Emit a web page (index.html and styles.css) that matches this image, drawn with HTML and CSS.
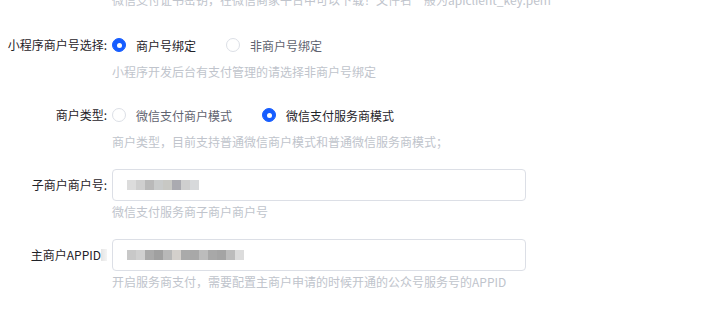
FILE: index.html
```
<!DOCTYPE html>
<html lang="zh-CN">
<head>
    <meta charset="UTF-8">
    <meta name="viewport" content="width=device-width, initial-scale=1.0">
    <title>支付设置</title>
    <link rel="stylesheet" href="styles.css">
</head>
<body>
<div class="form">
    <div class="form-tail">
        <div class="form-help">微信支付证书密钥，在微信商家平台中可以下载！文件名一般为apiclient_key.pem</div>
    </div>

    <div class="form-item">
        <div class="form-label">小程序商户号选择:</div>
        <div class="form-content">
            <div class="radio-group">
                <label class="radio checked"><span class="radio-dot"></span><span class="radio-text">商户号绑定</span></label>
                <label class="radio"><span class="radio-dot"></span><span class="radio-text">非商户号绑定</span></label>
            </div>
            <div class="form-help">小程序开发后台有支付管理的请选择非商户号绑定</div>
        </div>
    </div>

    <div class="form-item">
        <div class="form-label">商户类型:</div>
        <div class="form-content">
            <div class="radio-group">
                <label class="radio"><span class="radio-dot"></span><span class="radio-text">微信支付商户模式</span></label>
                <label class="radio checked"><span class="radio-dot"></span><span class="radio-text">微信支付服务商模式</span></label>
            </div>
            <div class="form-help">商户类型，目前支持普通微信商户模式和普通微信服务商模式；</div>
        </div>
    </div>

    <div class="form-item">
        <div class="form-label">子商户商户号:</div>
        <div class="form-content">
            <div class="input">
                <div class="mosaic">
                    <i style="background:#dcdcdc"></i><i style="background:#cfcfcf"></i><i style="background:#b9b9b9"></i><i style="background:#c9cbcb"></i><i style="background:#c8c8c4"></i><i style="background:#aaaab0"></i><i style="background:#cfcfcf"></i><i style="background:#d7d9db"></i>
                </div>
            </div>
            <div class="form-help">微信支付服务商子商户商户号</div>
        </div>
    </div>

    <div class="form-item">
        <div class="form-label">主商户APPID<span class="blur-colon"></span></div>
        <div class="form-content">
            <div class="input">
                <div class="mosaic">
                    <i style="background:#c8c8c8"></i><i style="background:#d0d0d0"></i><i style="background:#aaaaaa"></i><i style="background:#a0a0a0"></i><i style="background:#b8b8b8"></i><i style="background:#d4d0cc"></i><i style="background:#aaaaaa"></i><i style="background:#a8a8a8"></i><i style="background:#bcbcbc"></i><i style="background:#a8a8a8"></i><i style="background:#a4a4a4"></i><i style="background:#bcbcbc"></i><i style="background:#dcdcdc"></i>
                </div>
            </div>
            <div class="form-help">开启服务商支付，需要配置主商户申请的时候开通的公众号服务号的APPID</div>
        </div>
    </div>
</div>
</body>
</html>
```

FILE: styles.css
```
* {
    box-sizing: border-box;
}

body {
    margin: 0;
    background-color: #ffffff;
    font-family: "Noto Sans CJK SC", "Liberation Sans", sans-serif;
    font-size: 12px;
    color: #1f2329;
}

.form {
    margin-top: -11px;
}

.form-tail {
    padding-left: 112px;
    margin-bottom: 18px;
}

.form-item {
    display: flex;
    margin-bottom: 16px;
}

.form-label {
    width: 107px;
    flex-shrink: 0;
    height: 32px;
    line-height: 32px;
    text-align: right;
    white-space: nowrap;
    color: #1f2329;
}

.blur-colon {
    display: inline-block;
    width: 6px;
    height: 12px;
    vertical-align: -1px;
    background: linear-gradient(90deg, #e4e4e4, #f4f4f4);
}

.form-content {
    margin-left: 5px;
}

.form-help {
    height: 22px;
    line-height: 22px;
    color: #c0c4cc;
    white-space: nowrap;
}

.radio-group {
    display: flex;
    align-items: center;
    gap: 30px;
    height: 32px;
}

.radio {
    display: flex;
    align-items: center;
    gap: 10px;
    color: #5f6370;
}

.radio-dot {
    width: 14px;
    height: 14px;
    border-radius: 50%;
    border: 1px solid #dcdfe6;
    background-color: #ffffff;
    display: flex;
    align-items: center;
    justify-content: center;
}

.radio.checked {
    color: #1f2329;
}

.radio.checked .radio-dot {
    border-color: #165dff;
    background-color: #165dff;
}

.radio.checked .radio-dot::after {
    content: "";
    width: 5px;
    height: 5px;
    border-radius: 50%;
    background-color: #ffffff;
}

.input {
    width: 414px;
    height: 32px;
    border: 1px solid #dcdfe6;
    border-radius: 4px;
    padding-left: 14px;
    display: flex;
    align-items: center;
}

.mosaic {
    display: flex;
    height: 10px;
}

.mosaic i {
    width: 9px;
    height: 10px;
}
```
